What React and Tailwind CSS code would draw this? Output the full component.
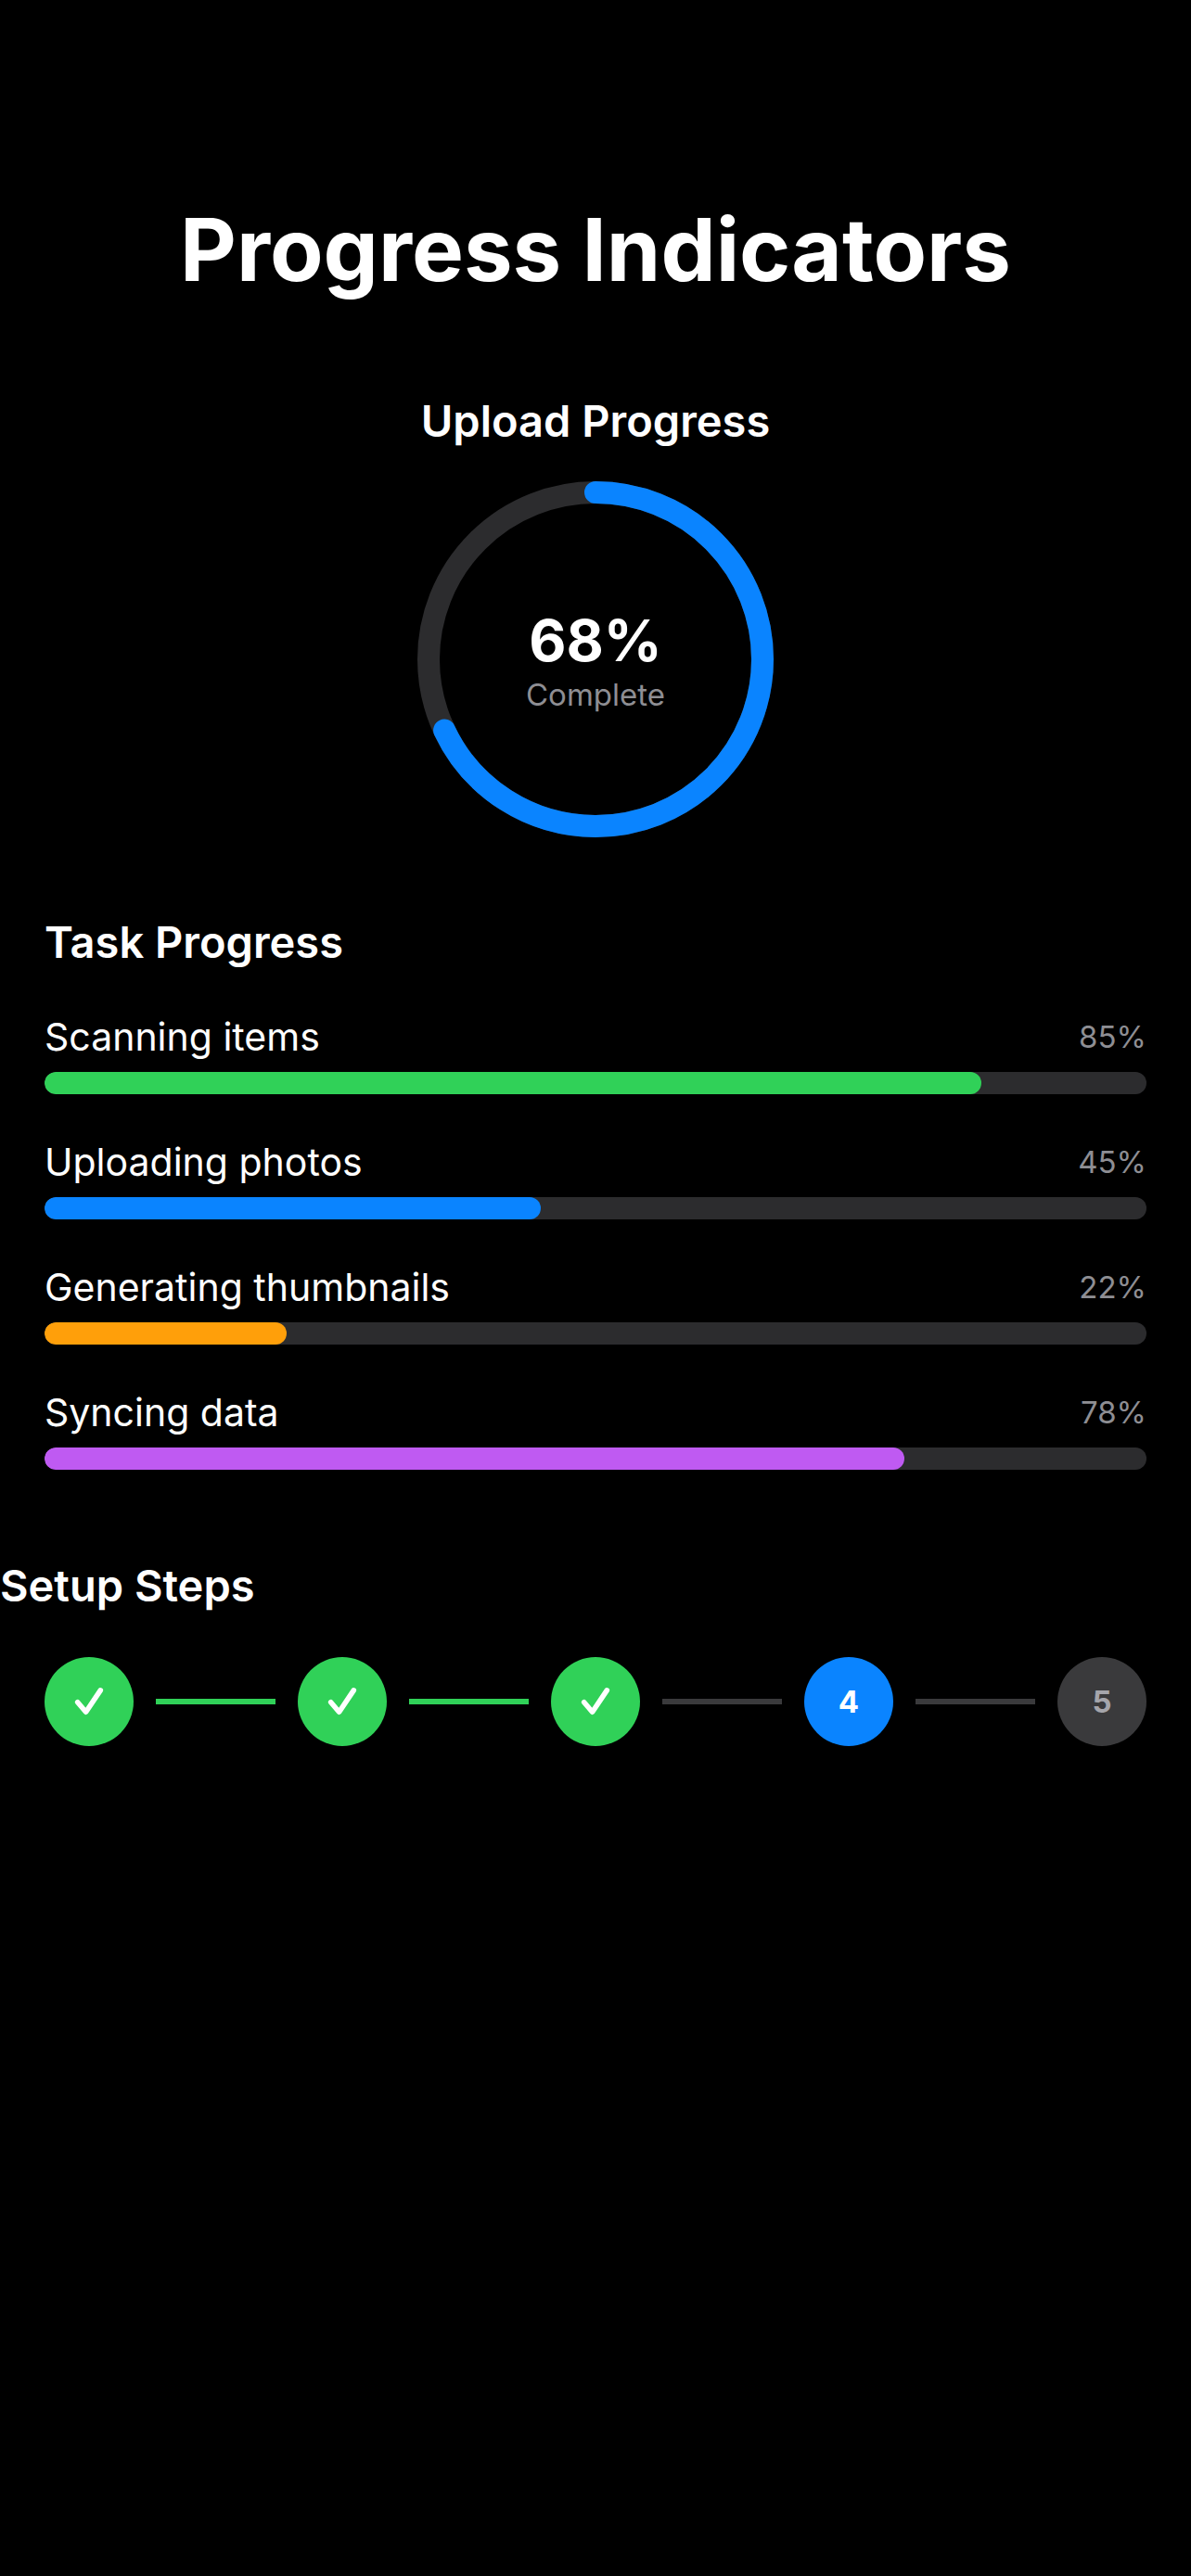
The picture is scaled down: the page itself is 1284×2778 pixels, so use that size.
const tasks = [
  { id: "scan", label: "Scanning items", value: 85, color: "bg-[#30d158]" },
  { id: "upload", label: "Uploading photos", value: 45, color: "bg-[#0a84ff]" },
  { id: "thumbs", label: "Generating thumbnails", value: 22, color: "bg-[#ff9f0a]" },
  { id: "sync", label: "Syncing data", value: 78, color: "bg-[#bf5af2]" },
];

const steps = [
  { n: 1, state: "done" },
  { n: 2, state: "done" },
  { n: 3, state: "done" },
  { n: 4, state: "current" },
  { n: 5, state: "pending" },
];

const stepStyle = {
  done: "bg-[#30d158] text-white",
  current: "bg-[#0a84ff] text-white",
  pending: "bg-[#3a3a3c] text-[#a5a5ab]",
};

function Ring({ value }) {
  return (
    <div
      role="progressbar"
      aria-label="Upload Progress"
      aria-valuenow={value}
      className="mt-[35px] grid size-96 place-items-center"
    >
      <svg viewBox="0 0 384 384" fill="none" strokeWidth="24" className="col-start-1 row-start-1 size-full -rotate-90">
        <circle cx="192" cy="192" r="180" stroke="#2c2c2e" />
        <circle
          cx="192"
          cy="192"
          r="180"
          stroke="#0a84ff"
          strokeLinecap="round"
          pathLength="100"
          strokeDasharray={`${value} 100`}
        />
      </svg>
      <div className="col-start-1 row-start-1 flex flex-col items-center">
        <span className="text-[62px] leading-[76px] font-bold">{value}%</span>
        <span className="text-[33px] leading-10 text-[#8e8e93]">Complete</span>
      </div>
    </div>
  );
}

function Task({ id, label, value, color }) {
  return (
    <li className="flex flex-col gap-3">
      <div className="flex items-center justify-between">
        <span id={id} className="text-[41px] leading-[52px]">{label}</span>
        <span className="text-[33px] leading-10 text-[#8e8e93]">{value}%</span>
      </div>
      <div
        role="progressbar"
        aria-labelledby={id}
        aria-valuenow={value}
        className="h-6 overflow-hidden rounded-full bg-[#2c2c2e]"
      >
        <div className={`h-full rounded-full ${color}`} style={{ width: `${value}%` }} />
      </div>
    </li>
  );
}

function Check() {
  return (
    <svg viewBox="0 0 96 96" fill="none" stroke="currentColor" strokeWidth="5.6" strokeLinecap="round" strokeLinejoin="round" className="size-full" aria-label="Done">
      <path d="M35.7 48.7L44.6 59.2L60.3 35.9" />
    </svg>
  );
}

export default function App() {
  return (
    <main className="min-h-screen bg-black pt-[209px] font-['Inter',sans-serif] text-white">
      <h1 className="text-center text-[94px] leading-[120px] font-bold">Progress Indicators</h1>

      <section className="mt-[95px] flex flex-col items-center">
        <h2 className="text-[47px] leading-[60px] font-semibold">Upload Progress</h2>
        <Ring value={68} />
      </section>

      <section className="mt-[83px] px-12">
        <h2 className="text-[47px] leading-[60px] font-semibold">Task Progress</h2>
        <ul className="mt-[46px] flex flex-col gap-[47px]">
          {tasks.map((t) => (
            <Task key={t.id} {...t} />
          ))}
        </ul>
      </section>

      <section className="mt-[95px]">
        <h2 className="text-[47px] leading-[60px] font-semibold">Setup Steps</h2>
        <ol className="mt-[47px] flex items-center gap-6 px-12">
          {steps.map((s, i) => (
            <li key={s.n} className={i ? "flex flex-1 items-center gap-6" : "flex"}>
              {i > 0 && (
                <span className={`h-1.5 flex-1 ${i < 3 ? "bg-[#30d158]" : "bg-[#3a3a3c]"}`} />
              )}
              <span
                className={`flex size-24 items-center justify-center rounded-full text-[33px] leading-10 font-bold ${stepStyle[s.state]}`}
              >
                {s.state === "done" ? <Check /> : s.n}
              </span>
            </li>
          ))}
        </ol>
      </section>
    </main>
  );
}
